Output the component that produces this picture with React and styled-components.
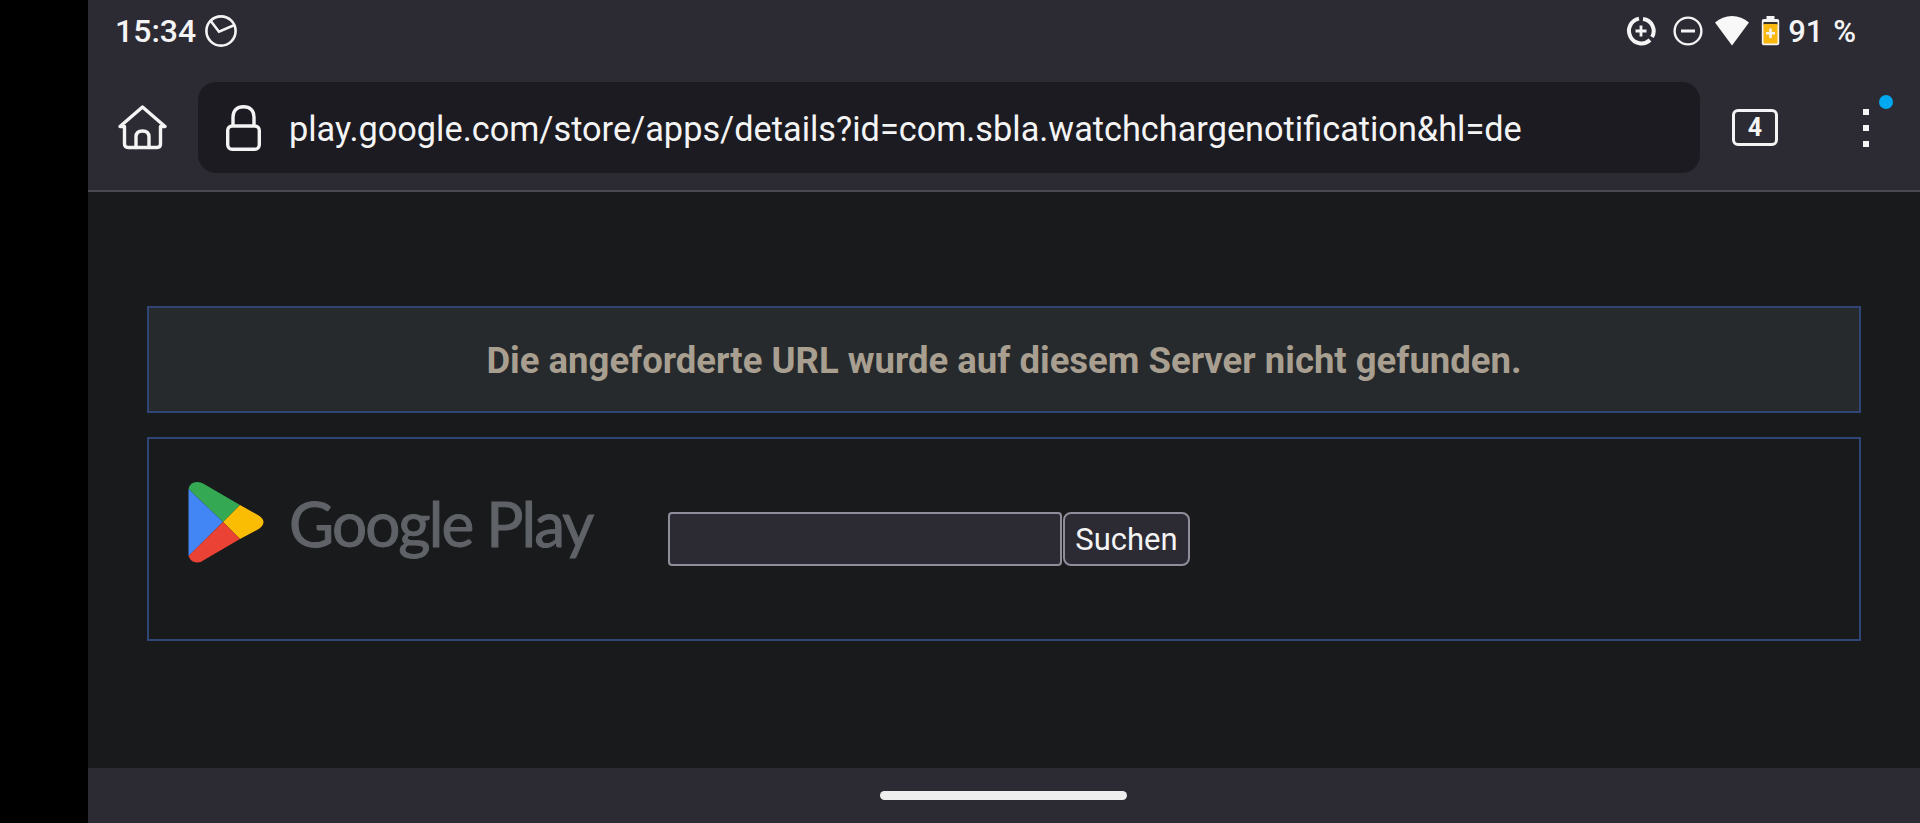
import styled, { createGlobalStyle } from 'styled-components';

const GlobalStyle = createGlobalStyle`
  html, body {
    margin: 0;
    padding: 0;
    background: #000;
  }
  body {
    font-family: Roboto, "Liberation Sans", sans-serif;
  }
`;

const Page = styled.div`
  display: flex;
  width: 1920px;
  height: 823px;
  overflow: hidden;
  background: #000;
`;

const Screen = styled.div`
  flex: 1;
  display: flex;
  flex-direction: column;
  margin-left: 88px;
  background: #191a1c;
`;

const StatusBar = styled.div`
  display: flex;
  align-items: center;
  justify-content: space-between;
  height: 62px;
  padding: 0 64px 0 27px;
  background: #2c2b34;
  color: #f4f4f5;
`;

const StatusGroup = styled.div`
  display: flex;
  align-items: center;
  gap: ${(p) => p.$gap || 9}px;
`;

const Time = styled.span`
  font-size: 32px;
  font-weight: 500;
`;

const Percent = styled.span`
  font-size: 31px;
  font-weight: 500;
  margin-left: -4px;
  word-spacing: 2px;
`;

const Toolbar = styled.div`
  display: flex;
  align-items: center;
  padding: 20px 24px 17px 30px;
  background: #2c2b34;
  border-bottom: 2px solid #4a4953;
`;

const HomeButton = styled.div`
  display: flex;
  width: 50px;
  margin-right: 30px;
`;

const UrlPill = styled.div`
  flex: 1;
  display: flex;
  align-items: center;
  height: 91px;
  padding-left: 28px;
  box-sizing: border-box;
  background: #1c1b21;
  border-radius: 18px;
`;

const LockIcon = styled.svg`
  flex: none;
  margin-right: 28px;
`;

const UrlText = styled.span`
  padding-top: 2px;
  color: #f4f4f5;
  font-size: 34.3px;
  white-space: nowrap;
`;

const TabCount = styled.div`
  display: flex;
  align-items: center;
  justify-content: center;
  width: 46px;
  height: 37px;
  margin-left: 32px;
  box-sizing: border-box;
  border: 3px solid #f4f4f5;
  border-radius: 6px;
  color: #f4f4f5;
  font-size: 25px;
  font-weight: 700;
`;

const MenuButton = styled.div`
  position: relative;
  display: flex;
  flex-direction: column;
  align-items: center;
  gap: 10px;
  width: 60px;
  margin-left: 58px;
`;

const MenuDot = styled.i`
  display: block;
  width: 6px;
  height: 6px;
  background: #f4f4f5;
`;

const UpdateBadge = styled.span`
  position: absolute;
  top: -14px;
  left: 43px;
  width: 14px;
  height: 14px;
  border-radius: 50%;
  background: #00a8f0;
`;

const Content = styled.main`
  flex: 1;
  padding: 114px 59px 0;
`;

const MessageCard = styled.div`
  display: flex;
  align-items: center;
  justify-content: center;
  height: 107px;
  padding-top: 2px;
  box-sizing: border-box;
  background: #272a2c;
  border: 2px solid #2f4674;
  color: #a89f91;
  font-size: 36.5px;
  font-weight: 700;
`;

const SearchCard = styled.div`
  display: flex;
  align-items: center;
  height: 204px;
  margin-top: 24px;
  padding-left: 39px;
  box-sizing: border-box;
  border: 2px solid #2f4674;
`;

const Logo = styled.div`
  display: flex;
  align-items: center;
  align-self: flex-start;
  gap: 25px;
  width: 480px;
  margin-top: 42px;
`;

const LogoText = styled.span`
  padding-top: 1px;
  color: #5f6368;
  font-family: Lato, Roboto, sans-serif;
  font-size: 62px;
  letter-spacing: -1.9px;
  -webkit-text-stroke: 1px #5f6368;
  white-space: nowrap;
`;

const SearchForm = styled.form`
  display: flex;
  gap: 1px;
`;

const SearchInput = styled.input`
  width: 394px;
  height: 54px;
  box-sizing: border-box;
  background: #2c2b34;
  border: 2px solid #8f8d9a;
  border-radius: 4px;
`;

const SearchButton = styled.button`
  width: 127px;
  height: 54px;
  padding: 0;
  box-sizing: border-box;
  background: #2c2b34;
  border: 2px solid #8f8d9a;
  border-radius: 8px;
  color: #f4f4f5;
  font-family: Roboto, sans-serif;
  font-size: 31px;
`;

const NavBar = styled.div`
  display: flex;
  align-items: center;
  justify-content: center;
  height: 55px;
  background: #2c2b34;
`;

const HomeIndicator = styled.div`
  width: 247px;
  height: 9px;
  margin-right: 1px;
  border-radius: 5px;
  background: #eee;
`;

const ClockIcon = () => (
  <svg width="32" height="32" viewBox="0 0 32 32" fill="none" stroke="#f4f4f5" strokeWidth="2.6">
    <circle cx="16" cy="16" r="14.6" />
    <path d="M5 5 L14 16.7 L29.5 10" />
  </svg>
);

const DataSaverIcon = () => (
  <svg width="30" height="30" viewBox="0 0 30 30" fill="none" stroke="#f4f4f5">
    <path d="M17 3 A12 12 0 0 1 26 21" strokeWidth="4" />
    <path d="M24 24 A12.5 12.5 0 1 1 13 2.6" strokeWidth="4" />
    <path d="M15 9.5 V20.5 M9.5 15 H20.5" strokeWidth="2.8" />
  </svg>
);

const DndIcon = () => (
  <svg width="30" height="30" viewBox="0 0 30 30" fill="none" stroke="#f4f4f5" strokeWidth="2.4">
    <circle cx="15" cy="15" r="13.4" />
    <path d="M8 15 H22" strokeWidth="3" />
  </svg>
);

const WifiIcon = () => (
  <svg width="34" height="30" viewBox="0 0 34 30" fill="#f8f8f8">
    <path d="M17 0 C10.5 0 5 2.2 0 6.5 L17 29.5 L34 6.5 C29 2.2 23.5 0 17 0 Z" />
  </svg>
);

const BatteryIcon = () => (
  <svg width="19" height="30" viewBox="0 0 19 30">
    <rect x="5.5" y="0" width="8" height="4" fill="#f4f4f5" />
    <rect x="0.8" y="3" width="17.4" height="26.2" rx="2" fill="#f4f4f5" />
    <rect x="2.5" y="6" width="14" height="3" fill="#3a3428" />
    <rect x="2.5" y="8" width="14" height="19.5" fill="#fbb80f" />
    <path d="M9.5 12.5 V22 M5 17.2 H14" stroke="#f4f4f5" strokeWidth="2.6" />
  </svg>
);

const HomeIcon = () => (
  <svg width="50" height="45" viewBox="0 0 50 45" fill="none" stroke="#f4f4f5" strokeWidth="3.4" strokeLinejoin="round" strokeLinecap="round">
    <path d="M2 21.5 L24.5 2 L47 21.5 H42.5 V39 Q42.5 42.5 39 42.5 H10 Q6.5 42.5 6.5 39 V21.5 Z" />
    <path d="M18 42.5 V32 Q18 26 24.5 26 Q31 26 31 32 V42.5" />
  </svg>
);

const PlayMark = () => (
  <svg width="76" height="83" viewBox="0 0 76 83">
    <path d="M0.5 8 Q2 1 9 1 Q13 1 16 3 L52 24 L35 41 Z" fill="#34a853" />
    <path d="M0.5 8 L35 41 L0.5 75 Z" fill="#4285f4" />
    <path d="M52 24 L69 33.5 Q75.5 37 75.5 41 Q75.5 45.5 69 49 L52 58 L35 41 Z" fill="#fbbc04" />
    <path d="M35 41 L52 58 L16 79 Q13 81.5 9 81.5 Q3 81.5 0.5 75 Z" fill="#ea4335" />
  </svg>
);

export default function App() {
  return (
    <>
      <GlobalStyle />
      <Page>
        <Screen>
          <StatusBar>
            <StatusGroup $gap={9}>
              <Time>15:34</Time>
              <ClockIcon />
            </StatusGroup>
            <StatusGroup $gap={12}>
              <StatusGroup $gap={17}>
                <DataSaverIcon />
                <DndIcon />
              </StatusGroup>
              <WifiIcon />
              <BatteryIcon />
              <Percent>91 %</Percent>
            </StatusGroup>
          </StatusBar>
          <Toolbar>
            <HomeButton>
              <HomeIcon />
            </HomeButton>
            <UrlPill>
              <LockIcon width="35" height="46" viewBox="0 0 35 46" fill="none" stroke="#f4f4f5" strokeWidth="3.4">
                <rect x="1.7" y="21" width="31.6" height="23.3" rx="4.5" />
                <path d="M7 21 V12 C7 5.5 11 1.7 17.5 1.7 C24 1.7 28 5.5 28 12 V21" />
              </LockIcon>
              <UrlText>play.google.com/store/apps/details?id=com.sbla.watchchargenotification&amp;hl=de</UrlText>
            </UrlPill>
            <TabCount>4</TabCount>
            <MenuButton>
              <UpdateBadge />
              <MenuDot />
              <MenuDot />
              <MenuDot />
            </MenuButton>
          </Toolbar>
          <Content>
            <MessageCard>Die angeforderte URL wurde auf diesem Server nicht gefunden.</MessageCard>
            <SearchCard>
              <Logo>
                <PlayMark />
                <LogoText>Google Play</LogoText>
              </Logo>
              <SearchForm>
                <SearchInput type="text" />
                <SearchButton type="button">Suchen</SearchButton>
              </SearchForm>
            </SearchCard>
          </Content>
          <NavBar>
            <HomeIndicator />
          </NavBar>
        </Screen>
      </Page>
    </>
  );
}
